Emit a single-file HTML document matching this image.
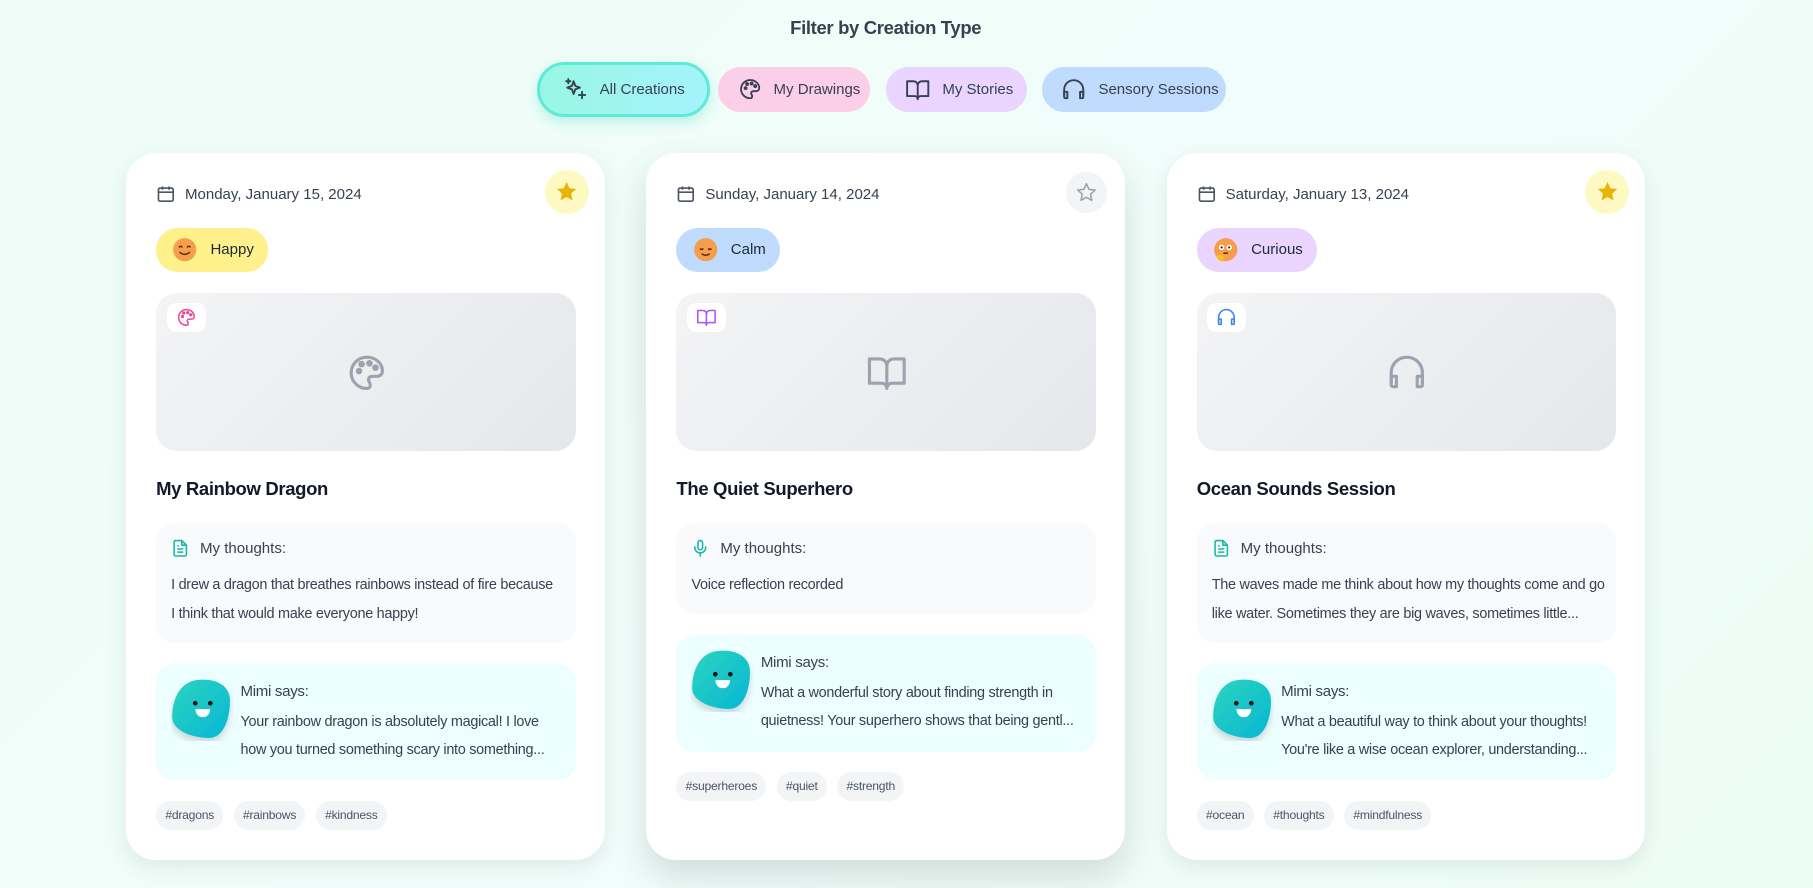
<!DOCTYPE html>
<html><head><meta charset="utf-8">
<style>
html{zoom:1.15625}
body{margin:0;width:1568px;height:768px;overflow:hidden;background:linear-gradient(135deg,#effdf8 0%,#f0fdfa 60%,#ecfdf5 100%);font-family:"Liberation Sans",sans-serif;color:#374151;position:relative}
.t{position:absolute;white-space:nowrap}
h1{position:absolute;top:15px;left:0;width:1532px;text-align:center;margin:0;font-size:16px;letter-spacing:-.3px;font-weight:bold;color:#374151}
.btn{position:absolute;top:58px;height:39px;border-radius:20px;display:flex;align-items:center;font-size:13px;color:#374151;box-sizing:border-box;white-space:nowrap}
.btn svg{margin-right:10px;flex:none}
.card{position:absolute;top:132px;width:414px;height:612px;background:#fff;border-radius:26px;box-shadow:0 6px 18px rgba(0,0,0,.08)}
.card .date{left:26px;top:27px;font-size:13px;display:flex;align-items:center;color:#374151;height:18px}
.card .date svg{margin-right:8px;flex:none}
.star{position:absolute;left:362px;top:15px;width:38px;height:38px;border-radius:50%;display:flex;align-items:center;justify-content:center}
.mood{position:absolute;left:26px;top:65px;height:38px;border-radius:19px;display:flex;align-items:center;padding:0 12px 0 14px;font-size:13px;color:#1f2937;white-space:nowrap}
.mood svg{margin-right:11px;flex:none}
.img{position:absolute;left:26px;top:121px;width:363px;height:137px;border-radius:18px;background:linear-gradient(135deg,#f3f4f6,#e5e7eb)}
.badge{position:absolute;left:9px;top:9px;width:34px;height:25px;background:#fff;border-radius:8px;display:flex;align-items:center;justify-content:center}
.img .c{position:absolute;left:164px;top:51px}
.title{left:26px;top:281px;font-size:16px;letter-spacing:-.3px;font-weight:bold;color:#111827}
.th{position:absolute;left:26px;top:320px;width:363px;background:#f9fafb;border-radius:16px}
.th .hd{left:13px;top:14px;font-size:13px;display:flex;align-items:center;color:#374151}
.th .hd svg{margin-right:9px}
.txt{font-size:12.5px;letter-spacing:-.25px;line-height:24.5px;color:#374151}
.mimi{position:absolute;left:26px;width:363px;height:101px;background:#ecfeff;border-radius:16px}
.av{position:absolute;left:13px;top:13px}
.tags{position:absolute;left:26px;display:flex;gap:9px}
.tag{height:25px;line-height:25px;padding:0 8px;background:#f3f4f6;border-radius:13px;font-size:10.5px;letter-spacing:-.2px;color:#4b5563}
</style></head><body>
<h1>Filter by Creation Type</h1>

<div class="btn" style="left:464px;top:54px;height:47px;width:150px;border:3px solid #5eead4;background:linear-gradient(90deg,#99f6e4,#a5f3fc);padding-left:20px;border-radius:24px;box-shadow:0 4px 10px rgba(45,212,191,.3)">
<svg width="22" height="22" viewBox="0 0 24 24" fill="none" stroke="#374151" stroke-width="1.8" stroke-linejoin="round" stroke-linecap="round"><path d="M10 4l1.6 4.4L16 10l-4.4 1.6L10 16l-1.6-4.4L4 10l4.4-1.6z"/><path d="M18 14v6M15 17h6M5 2v4M3 4h4"/></svg>All Creations</div>
<div class="btn" style="left:621px;width:131px;background:#fbcfe8;padding-left:17px">
<svg width="21" height="21" viewBox="0 0 24 24" fill="none" stroke="#374151" stroke-width="1.8"><path d="M12 3a9 9 0 0 0 0 18c1.5 0 2-1 2-2 0-1.5-1-1.5-1-3s1-2 2.5-2H18a3 3 0 0 0 3-3c0-4.5-4-8-9-8z"/><circle cx="7.5" cy="11" r="1" fill="#374151"/><circle cx="9" cy="7" r="1" fill="#374151"/><circle cx="13.5" cy="6.5" r="1" fill="#374151"/><circle cx="17" cy="9" r="1" fill="#374151"/></svg>My Drawings</div>
<div class="btn" style="left:766px;width:122px;background:#e9d5ff;padding-left:17px">
<svg width="22" height="22" viewBox="0 0 24 24" fill="none" stroke="#374151" stroke-width="1.8" stroke-linejoin="round"><path d="M2 4h6a4 4 0 0 1 4 4v13a3 3 0 0 0-3-3H2zM22 4h-6a4 4 0 0 0-4 4v13a3 3 0 0 1 3-3h7z"/></svg>My Stories</div>
<div class="btn" style="left:901px;width:159px;background:#bfdbfe;padding-left:17px">
<svg width="22" height="22" viewBox="0 0 24 24" fill="none" stroke="#374151" stroke-width="1.8" stroke-linejoin="round"><path d="M3 18v-6a9 9 0 0 1 18 0v6"/><path d="M3 14h3v6H4a1 1 0 0 1-1-1zM21 14h-3v6h2a1 1 0 0 0 1-1z"/></svg>Sensory Sessions</div>

<div class="card" style="left:109px">
 <div class="t date"><svg width="17" height="17" viewBox="0 0 24 24" fill="none" stroke="#4b5563" stroke-width="2"><rect x="3" y="5" width="18" height="16" rx="2"/><path d="M3 10h18M8 3v4M16 3v4"/></svg>Monday, January 15, 2024</div>
 <div class="star" style="background:#fef9c3"><svg width="20" height="20" viewBox="0 0 24 24"><path d="M12 2l3 6.5 7 .8-5.2 4.8 1.4 7L12 17.6 5.8 21.1l1.4-7L2 9.3l7-.8z" fill="#eab308"/></svg></div>
 <div class="mood" style="background:#fef08a"><svg width="22" height="22" viewBox="0 0 22 22"><circle cx="11" cy="11" r="10" fill="#f59e4b"/><path d="M6 9q1.5-2 3 0M13 9q1.5-2 3 0M6.5 13q4.5 4 9 0" stroke="#5b2b0f" stroke-width="1.3" fill="none"/></svg>Happy</div>
 <div class="img"><div class="badge"><svg width="18" height="18" viewBox="0 0 24 24" fill="none" stroke="#ec4899" stroke-width="1.8"><path d="M12 3a9 9 0 0 0 0 18c1.5 0 2-1 2-2 0-1.5-1-1.5-1-3s1-2 2.5-2H18a3 3 0 0 0 3-3c0-4.5-4-8-9-8z"/><circle cx="7.5" cy="11" r="1" fill="#ec4899"/><circle cx="9" cy="7" r="1" fill="#ec4899"/><circle cx="13.5" cy="6.5" r="1" fill="#ec4899"/><circle cx="17" cy="9" r="1" fill="#ec4899"/></svg></div>
 <svg class="c" width="36" height="36" viewBox="0 0 24 24" fill="none" stroke="#9ca3af" stroke-width="1.8"><path d="M12 3a9 9 0 0 0 0 18c1.5 0 2-1 2-2 0-1.5-1-1.5-1-3s1-2 2.5-2H18a3 3 0 0 0 3-3c0-4.5-4-8-9-8z"/><circle cx="7.5" cy="11" r="1" fill="#9ca3af"/><circle cx="9" cy="7" r="1" fill="#9ca3af"/><circle cx="13.5" cy="6.5" r="1" fill="#9ca3af"/><circle cx="17" cy="9" r="1" fill="#9ca3af"/></svg></div>
 <div class="t title">My Rainbow Dragon</div>
 <div class="th" style="height:104px"><div class="t hd"><svg width="16" height="16" viewBox="0 0 24 24" fill="none" stroke="#14b8a6" stroke-width="2" stroke-linejoin="round"><path d="M14 2H6a2 2 0 0 0-2 2v16a2 2 0 0 0 2 2h12a2 2 0 0 0 2-2V8z"/><path d="M14 2v6h6M8 13h8M8 17h8M8 9h2"/></svg>My thoughts:</div>
 <div class="t txt" style="left:13px;top:42px">I drew a dragon that breathes rainbows instead of fire because<br>I think that would make everyone happy!</div></div>
 <div class="mimi" style="top:442px"><svg class="av" width="54" height="54" viewBox="0 0 54 54"><defs><linearGradient id="g" x1="0" y1="0" x2="1" y2="1"><stop offset="0" stop-color="#2dd4bf"/><stop offset="1" stop-color="#06b6d4"/></linearGradient><filter id="s"><feDropShadow dx="0" dy="4" stdDeviation="3" flood-opacity=".15"/></filter></defs><path d="M22 1c14-2 29 3 29 18 0 16-6 32-18 32C17 51 1 44 1 33 1 17 8 3 22 1z" fill="url(#g)" filter="url(#s)"/><circle cx="21" cy="21" r="2" fill="#111"/><circle cx="34" cy="21" r="2" fill="#111"/><path d="M21 26h13q-1 7-6.5 7T21 26z" fill="#fff"/></svg>
 <div class="t txt" style="left:73px;top:12px;font-size:13px">Mimi says:</div>
 <div class="t txt" style="left:73px;top:38px">Your rainbow dragon is absolutely magical! I love<br>how you turned something scary into something...</div></div>
 <div class="tags" style="top:561px"><span class="tag">#dragons</span><span class="tag">#rainbows</span><span class="tag">#kindness</span></div>
</div>

<div class="card" style="left:559px;box-shadow:0 14px 30px rgba(0,0,0,.13)">
 <div class="t date"><svg width="17" height="17" viewBox="0 0 24 24" fill="none" stroke="#4b5563" stroke-width="2"><rect x="3" y="5" width="18" height="16" rx="2"/><path d="M3 10h18M8 3v4M16 3v4"/></svg>Sunday, January 14, 2024</div>
 <div class="star" style="background:#f3f4f6;left:363px;top:17px;width:35px;height:35px"><svg width="18" height="18" viewBox="0 0 24 24"><path d="M12 2l3 6.5 7 .8-5.2 4.8 1.4 7L12 17.6 5.8 21.1l1.4-7L2 9.3l7-.8z" fill="none" stroke="#9ca3af" stroke-width="1.8" stroke-linejoin="round"/></svg></div>
 <div class="mood" style="background:#bfdbfe"><svg width="22" height="22" viewBox="0 0 22 22"><circle cx="11" cy="11" r="10" fill="#f59e4b"/><path d="M6 10q1.5 1.5 3 0M13 10q1.5 1.5 3 0M7.5 14.5q3.5 2.5 7 0" stroke="#5b2b0f" stroke-width="1.3" fill="none"/></svg>Calm</div>
 <div class="img"><div class="badge"><svg width="18" height="18" viewBox="0 0 24 24" fill="none" stroke="#a855f7" stroke-width="1.8" stroke-linejoin="round"><path d="M2 4h6a4 4 0 0 1 4 4v13a3 3 0 0 0-3-3H2zM22 4h-6a4 4 0 0 0-4 4v13a3 3 0 0 1 3-3h7z"/></svg></div>
 <svg class="c" width="36" height="36" viewBox="0 0 24 24" fill="none" stroke="#9ca3af" stroke-width="1.8" stroke-linejoin="round"><path d="M2 4h6a4 4 0 0 1 4 4v13a3 3 0 0 0-3-3H2zM22 4h-6a4 4 0 0 0-4 4v13a3 3 0 0 1 3-3h7z"/></svg></div>
 <div class="t title">The Quiet Superhero</div>
 <div class="th" style="height:79px"><div class="t hd"><svg width="16" height="16" viewBox="0 0 24 24" fill="none" stroke="#14b8a6" stroke-width="2" stroke-linecap="round"><rect x="9" y="2" width="6" height="12" rx="3"/><path d="M5 10v1a7 7 0 0 0 14 0v-1M12 18v4"/></svg>My thoughts:</div>
 <div class="t txt" style="left:13px;top:42px">Voice reflection recorded</div></div>
 <div class="mimi" style="top:417px"><svg class="av" width="54" height="54" viewBox="0 0 54 54"><path d="M22 1c14-2 29 3 29 18 0 16-6 32-18 32C17 51 1 44 1 33 1 17 8 3 22 1z" fill="url(#g)" filter="url(#s)"/><circle cx="21" cy="21" r="2" fill="#111"/><circle cx="34" cy="21" r="2" fill="#111"/><path d="M21 26h13q-1 7-6.5 7T21 26z" fill="#fff"/></svg>
 <div class="t txt" style="left:73px;top:12px;font-size:13px">Mimi says:</div>
 <div class="t txt" style="left:73px;top:38px">What a wonderful story about finding strength in<br>quietness! Your superhero shows that being gentl...</div></div>
 <div class="tags" style="top:536px"><span class="tag">#superheroes</span><span class="tag">#quiet</span><span class="tag">#strength</span></div>
</div>

<div class="card" style="left:1009px">
 <div class="t date"><svg width="17" height="17" viewBox="0 0 24 24" fill="none" stroke="#4b5563" stroke-width="2"><rect x="3" y="5" width="18" height="16" rx="2"/><path d="M3 10h18M8 3v4M16 3v4"/></svg>Saturday, January 13, 2024</div>
 <div class="star" style="background:#fef9c3"><svg width="20" height="20" viewBox="0 0 24 24"><path d="M12 2l3 6.5 7 .8-5.2 4.8 1.4 7L12 17.6 5.8 21.1l1.4-7L2 9.3l7-.8z" fill="#eab308"/></svg></div>
 <div class="mood" style="background:#e9d5ff"><svg width="22" height="22" viewBox="0 0 22 22"><circle cx="11" cy="11" r="10" fill="#f59e4b"/><circle cx="7.5" cy="9" r="2.3" fill="#fff"/><circle cx="14" cy="9" r="2.3" fill="#fff"/><circle cx="7.5" cy="9" r="1" fill="#333"/><circle cx="14" cy="9" r="1" fill="#333"/><path d="M9 14h4" stroke="#5b2b0f" stroke-width="1.3"/><path d="M3 17q3-3 7 0l-2 4q-4 0-5-4z" fill="#fbbf24"/></svg>Curious</div>
 <div class="img"><div class="badge"><svg width="18" height="18" viewBox="0 0 24 24" fill="none" stroke="#3b82f6" stroke-width="1.8" stroke-linejoin="round"><path d="M3 18v-6a9 9 0 0 1 18 0v6"/><path d="M3 14h3v6H4a1 1 0 0 1-1-1zM21 14h-3v6h2a1 1 0 0 0 1-1z"/></svg></div>
 <svg class="c" width="36" height="36" viewBox="0 0 24 24" fill="none" stroke="#9ca3af" stroke-width="1.8" stroke-linejoin="round"><path d="M3 18v-6a9 9 0 0 1 18 0v6"/><path d="M3 14h3v6H4a1 1 0 0 1-1-1zM21 14h-3v6h2a1 1 0 0 0 1-1z"/></svg></div>
 <div class="t title">Ocean Sounds Session</div>
 <div class="th" style="height:104px"><div class="t hd"><svg width="16" height="16" viewBox="0 0 24 24" fill="none" stroke="#14b8a6" stroke-width="2" stroke-linejoin="round"><path d="M14 2H6a2 2 0 0 0-2 2v16a2 2 0 0 0 2 2h12a2 2 0 0 0 2-2V8z"/><path d="M14 2v6h6M8 13h8M8 17h8M8 9h2"/></svg>My thoughts:</div>
 <div class="t txt" style="left:13px;top:42px">The waves made me think about how my thoughts come and go<br>like water. Sometimes they are big waves, sometimes little...</div></div>
 <div class="mimi" style="top:442px"><svg class="av" width="54" height="54" viewBox="0 0 54 54"><path d="M22 1c14-2 29 3 29 18 0 16-6 32-18 32C17 51 1 44 1 33 1 17 8 3 22 1z" fill="url(#g)" filter="url(#s)"/><circle cx="21" cy="21" r="2" fill="#111"/><circle cx="34" cy="21" r="2" fill="#111"/><path d="M21 26h13q-1 7-6.5 7T21 26z" fill="#fff"/></svg>
 <div class="t txt" style="left:73px;top:12px;font-size:13px">Mimi says:</div>
 <div class="t txt" style="left:73px;top:38px">What a beautiful way to think about your thoughts!<br>You're like a wise ocean explorer, understanding...</div></div>
 <div class="tags" style="top:561px"><span class="tag">#ocean</span><span class="tag">#thoughts</span><span class="tag">#mindfulness</span></div>
</div>
</body></html>
